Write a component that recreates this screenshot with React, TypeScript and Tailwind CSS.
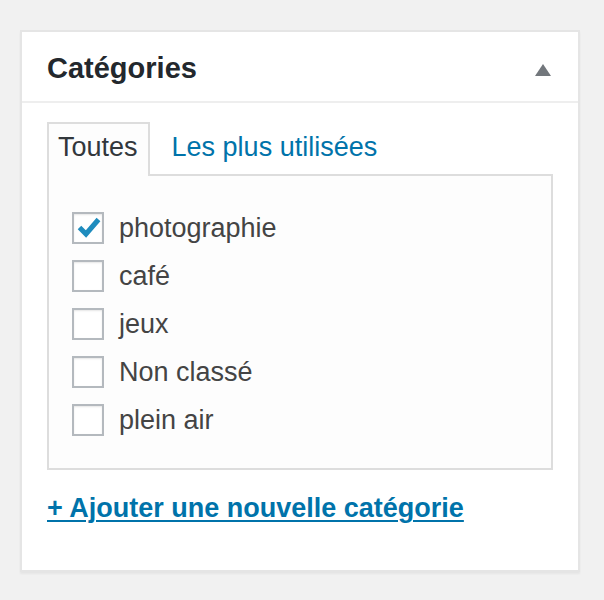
const categories = [
  { name: "photographie", checked: true },
  { name: "café", checked: false },
  { name: "jeux", checked: false },
  { name: "Non classé", checked: false },
  { name: "plein air", checked: false },
];

function Checkbox({ checked }: { checked: boolean }) {
  return (
    <span className="relative w-[32px] h-[32px] shrink-0 border-2 border-[#b4b9be] bg-white shadow-[inset_0_1px_2px_rgba(0,0,0,0.1)]">
      {checked && (
        <svg className="absolute left-[-2px] top-[-2px]" width="32" height="32" viewBox="0 0 32 32">
          <path d="M7.5 15.5 L14 22 L26.5 7.5" fill="none" stroke="#1e8cbe" strokeWidth="5" />
        </svg>
      )}
    </span>
  );
}

export default function App() {
  return (
    <div className="w-[604px] h-[600px] bg-[#f1f1f1] pt-[30px] pl-[20px] font-['Liberation_Sans',Arial,sans-serif]">
      <div className="w-[560px] bg-white border-2 border-[#e5e5e5] shadow-[0_2px_2px_rgba(0,0,0,0.05)]">
        <div className="h-[71px] pl-[25px] pr-[27px] flex items-center justify-between border-b-2 border-[#eeeeee]">
          <h2 className="text-[29px] leading-[29px] font-bold text-[#23282d] mt-[3px]">Catégories</h2>
          <svg className="mt-[6px]" width="16" height="12" viewBox="0 0 16 12">
            <polygon points="8,0 16,12 0,12" fill="#72777c" />
          </svg>
        </div>
        <div className="px-[25px] pt-[19px] pb-[48px]">
          <div className="flex items-start">
            <div className="relative z-10 -mb-[2px] h-[54px] border-2 border-b-0 border-[#dddddd] bg-[#fdfdfd] pl-[9px] pr-[10px] pt-[10px] text-[27px] leading-[27px] text-[#32373c]">
              Toutes
            </div>
            <a href="#" className="ml-[22px] pt-[12px] text-[27px] leading-[27px] text-[#0073aa]">
              Les plus utilisées
            </a>
          </div>
          <div className="border-2 border-[#dddddd] bg-[#fdfdfd] pl-[23px] pt-[28px] pb-[24px]">
            {categories.map((c) => (
              <label key={c.name} className="h-[48px] flex items-center gap-[15px]">
                <Checkbox checked={c.checked} />
                <span className="text-[27px] leading-[27px] text-[#444444] mt-[1px]">{c.name}</span>
              </label>
            ))}
          </div>
          <a href="#" className="block mt-[25px] text-[27px] leading-[27px] font-bold text-[#0073aa] underline underline-offset-[3px] decoration-2">
            + Ajouter une nouvelle catégorie
          </a>
        </div>
      </div>
    </div>
  );
}
